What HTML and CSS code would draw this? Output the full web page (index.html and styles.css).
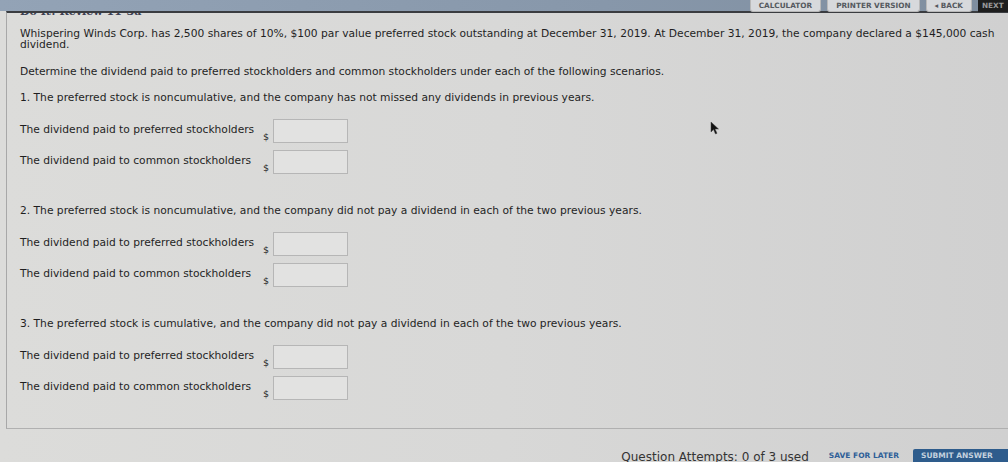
FILE: index.html
```html
<!DOCTYPE html>
<html lang="en">
<head>
    <meta charset="UTF-8">
    <title>Do It! Review 11-3a</title>
    <link rel="stylesheet" href="styles.css">
</head>
<body>

    <div class="top-bar">
        <button class="tool-button">CALCULATOR</button>
        <button class="tool-button">PRINTER VERSION</button>
        <button class="tool-button">&#9666; BACK</button>
        <button class="tool-button next">NEXT</button>
    </div>

    <div class="question-panel">
        <div class="title-strip"><span class="title">Do It! Review 11-3a</span></div>

        <p class="intro">Whispering Winds Corp. has 2,500 shares of 10%, $100 par value preferred stock outstanding at December 31, 2019. At December 31, 2019, the company declared a $145,000 cash dividend.</p>

        <p class="instructions">Determine the dividend paid to preferred stockholders and common stockholders under each of the following scenarios.</p>

        <div class="scenario">
            <p class="scenario-title">1. The preferred stock is noncumulative, and the company has not missed any dividends in previous years.</p>
            <div class="answer-row">
                <span class="answer-label">The dividend paid to preferred stockholders</span>
                <span class="currency">$</span>
                <span class="answer-box"></span>
            </div>
            <div class="answer-row">
                <span class="answer-label">The dividend paid to common stockholders</span>
                <span class="currency">$</span>
                <span class="answer-box"></span>
            </div>
        </div>

        <div class="scenario">
            <p class="scenario-title">2. The preferred stock is noncumulative, and the company did not pay a dividend in each of the two previous years.</p>
            <div class="answer-row">
                <span class="answer-label">The dividend paid to preferred stockholders</span>
                <span class="currency">$</span>
                <span class="answer-box"></span>
            </div>
            <div class="answer-row">
                <span class="answer-label">The dividend paid to common stockholders</span>
                <span class="currency">$</span>
                <span class="answer-box"></span>
            </div>
        </div>

        <div class="scenario">
            <p class="scenario-title">3. The preferred stock is cumulative, and the company did not pay a dividend in each of the two previous years.</p>
            <div class="answer-row">
                <span class="answer-label">The dividend paid to preferred stockholders</span>
                <span class="currency">$</span>
                <span class="answer-box"></span>
            </div>
            <div class="answer-row">
                <span class="answer-label">The dividend paid to common stockholders</span>
                <span class="currency">$</span>
                <span class="answer-box"></span>
            </div>
        </div>
    </div>

    <div class="footer">
        <span class="attempts">Question Attempts: 0 of 3 used</span>
        <button class="save-button">SAVE FOR LATER</button>
        <button class="submit-button">SUBMIT ANSWER</button>
    </div>

    <!-- puntero del raton -->
    <svg class="cursor" width="10" height="14" viewBox="0 0 10 14">
        <path d="M1 1 L1 11 L3.5 8.5 L5.5 13 L7 12.3 L5 8 L8.5 8 Z" fill="#111" stroke="#444" stroke-width="0.5"/>
    </svg>

</body>
</html>
```

FILE: styles.css
```css
/* pagina */

body {
  margin: 0;
  width: 1008px;
  height: 462px;
  overflow: hidden;
  position: relative;
  font-family: "DejaVu Sans", Verdana, sans-serif;
  font-size: 10.7px;
  color: #1f1f1f;
  background: linear-gradient(90deg, #dcdcda 0%, #d8d8d7 50%, #d0d0d0 100%);
}
p {
  margin: 0;
}

/* barra superior */

.top-bar {
  height: 11px;
  display: flex;
  justify-content: flex-end;
  align-items: flex-start;
  gap: 6px;
  background: linear-gradient(90deg, #93a3b6 0%, #8797aa 60%, #7f8e9f 100%);
}
.tool-button {
  height: 12px;
  padding: 0 8px;
  border: 1px solid #b9b9b9;
  border-top: none;
  border-radius: 0 0 3px 3px;
  background-color: #d7d9dc;
  color: #55595f;
  font-family: "DejaVu Sans", Verdana, sans-serif;
  font-size: 7.3px;
  font-weight: bold;
  line-height: 10px;
  position: relative;
  z-index: 2;
}
.tool-button.next {
  width: 30px;
  padding: 0 4px;
  border: none;
  border-radius: 0;
  background-color: #1e1e1e;
  color: #9a9a9a;
  text-align: left;
  overflow: hidden;
}

/* panel de la pregunta */

.question-panel {
  margin-left: 6px;
  height: 415px;
  border-top: 2px solid #3a3c40;
  border-left: 1px solid #a8a8a8;
  border-bottom: 1px solid #b0b0b0;
  padding-left: 13px;
  padding-right: 6px;
}
.title-strip {
  height: 5px;
  overflow: hidden;
}
.title {
  display: block;
  margin-top: -8px;
  font-family: "DejaVu Serif", serif;
  font-size: 11px;
  font-weight: bold;
  color: #3b3f52;
}
.intro {
  margin-top: 11px;
  line-height: 10.5px;
}
.instructions {
  margin-top: 17px;
  line-height: 10px;
}
.scenario {
  margin-top: 16px;
}
.scenario + .scenario {
  margin-top: 33px;
}
.scenario-title {
  line-height: 10px;
  margin-bottom: 16px;
}
.answer-row {
  display: flex;
  align-items: flex-start;
  height: 23px;
  margin-bottom: 8px;
}
.answer-label {
  width: 243px;
  padding-top: 4px;
  white-space: nowrap;
}
.currency {
  width: 10px;
  padding-top: 12px;
  font-size: 9.5px;
}
.answer-box {
  width: 73px;
  height: 22px;
  border: 1px solid #b6b6b6;
  background-color: #e2e2e1;
}

/* pie */

.footer {
  display: flex;
  justify-content: flex-end;
  align-items: flex-end;
  height: 33px;
}
.attempts {
  font-size: 12px;
  color: #333;
  margin-right: 20px;
  line-height: 10px;
}
.save-button {
  border: none;
  background: none;
  color: #2f5f98;
  font-family: "DejaVu Sans", Verdana, sans-serif;
  font-size: 7.5px;
  font-weight: bold;
  padding: 0;
  height: 13px;
  margin-right: 14px;
}
.submit-button {
  width: 95px;
  height: 13px;
  border: none;
  border-radius: 2px 0 0 0;
  background-color: #2e5c8c;
  color: #c5d2df;
  font-family: "DejaVu Sans", Verdana, sans-serif;
  font-size: 7.5px;
  font-weight: bold;
  padding: 0;
  text-align: left;
  padding-left: 8px;
}

/* puntero */

.cursor {
  position: absolute;
  left: 710px;
  top: 121px;
}
```
